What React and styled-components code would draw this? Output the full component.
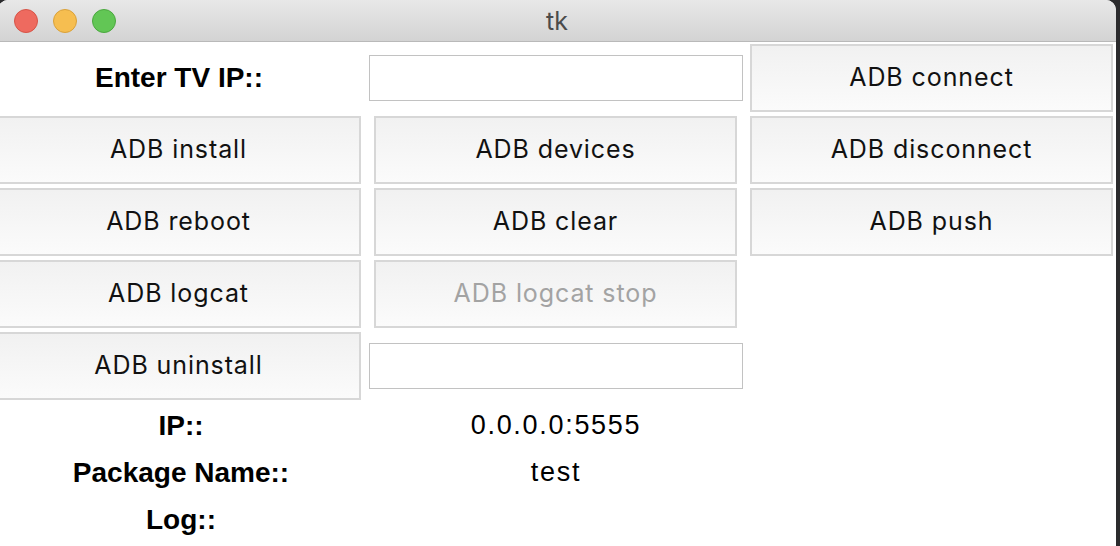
import React from 'react';
import styled, { createGlobalStyle } from 'styled-components';

const Global = createGlobalStyle`
html, body {
  margin: 0;
  padding: 0;
  background: #2b2b2d;
  overflow: hidden;
}
`;

const Window = styled.div`
width: 1118px;
height: 556px;
margin-left: -2px;
background: #ffffff;
border-radius: 10px;
overflow: hidden;
display: flex;
flex-direction: column;
`;

const TitleBar = styled.div`
height: 41px;
flex-shrink: 0;
background: linear-gradient(#e8e8e8, #d3d3d3);
border-bottom: 1px solid #b9b9b9;
display: flex;
align-items: center;
position: relative;
`;

const Lights = styled.div`
display: flex;
gap: 15px;
padding-left: 16px;
`;

const Light = styled.span`
width: 24px;
height: 24px;
border-radius: 50%;
box-sizing: border-box;
background: ${p => p.color};
border: 1px solid ${p => p.edge};
`;

const Title = styled.div`
position: absolute;
left: 0;
right: 0;
text-align: center;
font-family: Inter, "Liberation Sans", sans-serif;
font-size: 25px;
color: #4b4b4b;
pointer-events: none;
`;

const Grid = styled.div`
display: grid;
grid-template-columns: 366px 374px 363px;
grid-template-rows: repeat(5, 68px) repeat(3, 43px);
column-gap: 7px;
row-gap: 4px;
padding-top: 2px;
margin-left: -2px;
`;

const Button = styled.div`
box-sizing: border-box;
height: 68px;
border: 2px solid #d7d7d7;
background: linear-gradient(#f1f1f1, #fbfbfb);
display: flex;
align-items: center;
justify-content: center;
padding-bottom: 2px;
font-family: Inter, "Liberation Sans", sans-serif;
font-size: 25px;
letter-spacing: 0.9px;
color: ${p => (p.disabled ? '#a3a3a3' : '#111111')};
margin: ${p => (p.col === 2 ? '0 6px 0 5px' : p.col === 1 ? '0 1px 0 0' : '0')};
`;

const Entry = styled.div`
align-self: center;
box-sizing: border-box;
height: 46px;
border: 1px solid #c2c2c2;
background: #ffffff;
`;

const Label = styled.div`
display: flex;
align-items: center;
justify-content: center;
font-family: "Liberation Sans", Arial, sans-serif;
font-weight: bold;
font-size: 28px;
color: #000;
padding-left: ${p => p.shift || 0}px;
`;

const Value = styled.div`
display: flex;
align-items: center;
justify-content: center;
font-family: "Liberation Sans", Arial, sans-serif;
font-size: 27px;
letter-spacing: 1.7px;
color: #000;
`;

const Empty = styled.div``;

export default function App() {
  return (
    <>
      <Global />
      <Window>
        <TitleBar>
          <Lights>
            <Light color="#ee6a5f" edge="#d65447" />
            <Light color="#f6be50" edge="#d9a13a" />
            <Light color="#62c655" edge="#4ba83f" />
          </Lights>
          <Title>tk</Title>
        </TitleBar>
        <Grid>
          <Label>Enter TV IP::</Label>
          <Entry />
          <Button col={3}>ADB connect</Button>

          <Button col={1}>ADB install</Button>
          <Button col={2}>ADB devices</Button>
          <Button col={3}>ADB disconnect</Button>

          <Button col={1}>ADB reboot</Button>
          <Button col={2}>ADB clear</Button>
          <Button col={3}>ADB push</Button>

          <Button col={1}>ADB logcat</Button>
          <Button col={2} disabled>ADB logcat stop</Button>
          <Empty />

          <Button col={1}>ADB uninstall</Button>
          <Entry />
          <Empty />

          <Label shift={4}>IP::</Label>
          <Value>0.0.0.0:5555</Value>
          <Empty />

          <Label shift={4}>Package Name::</Label>
          <Value>test</Value>
          <Empty />

          <Label shift={4}>Log::</Label>
          <Empty />
          <Empty />
        </Grid>
      </Window>
    </>
  );
}
